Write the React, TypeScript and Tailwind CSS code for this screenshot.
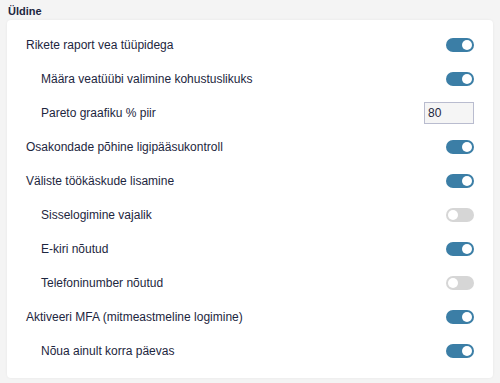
import React from 'react';

type Row = { label: string; sub?: boolean; kind: 'on' | 'off' | 'input'; value?: string };

const rows: Row[] = [
  { label: 'Rikete raport vea tüüpidega', kind: 'on' },
  { label: 'Määra veatüübi valimine kohustuslikuks', sub: true, kind: 'on' },
  { label: 'Pareto graafiku % piir', sub: true, kind: 'input', value: '80' },
  { label: 'Osakondade põhine ligipääsukontroll', kind: 'on' },
  { label: 'Väliste töökäskude lisamine', kind: 'on' },
  { label: 'Sisselogimine vajalik', sub: true, kind: 'off' },
  { label: 'E-kiri nõutud', sub: true, kind: 'on' },
  { label: 'Telefoninumber nõutud', sub: true, kind: 'off' },
  { label: 'Aktiveeri MFA (mitmeastmeline logimine)', kind: 'on' },
  { label: 'Nõua ainult korra päevas', sub: true, kind: 'on' },
];

function Toggle({ on }: { on: boolean }) {
  return (
    <div
      className={`flex h-[14px] w-[28px] items-center rounded-full px-[2px] ${
        on ? 'justify-end bg-[#3b7ea6]' : 'justify-start bg-[#d6d6d6]'
      }`}
    >
      <div className="h-[10px] w-[10px] rounded-full bg-white" />
    </div>
  );
}

export default function App() {
  return (
    <div className="min-h-[383px] bg-[#f4f4f4] px-[7px] pt-[5px] font-['Liberation_Sans',Arial,sans-serif] text-[#1d2640]">
      <div className="pl-[1px] text-[11px] font-bold leading-[13px]">Üldine</div>
      <div className="mt-[2px] w-[486px] rounded-[4px] bg-white pt-[8px] pb-[10px] shadow-[0_0_3px_rgba(0,0,0,0.06)]">
        {rows.map((r) => (
          <div key={r.label} className="flex h-[34px] items-center justify-between pr-[19px]">
            <span className={`text-[12px] ${r.sub ? 'pl-[34px]' : 'pl-[19px]'}`}>{r.label}</span>
            {r.kind === 'input' ? (
              <div className="flex h-[22px] w-[50px] items-center border border-[#b9bccf] bg-[#f5f5f5] pl-[3px] text-[12px]">
                {r.value}
              </div>
            ) : (
              <Toggle on={r.kind === 'on'} />
            )}
          </div>
        ))}
      </div>
    </div>
  );
}
